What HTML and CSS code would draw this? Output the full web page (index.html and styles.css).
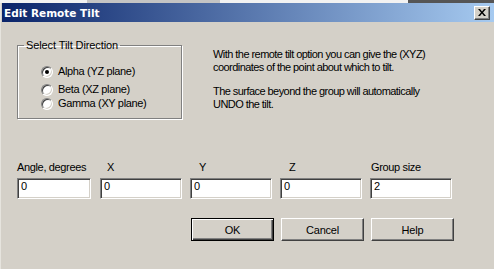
FILE: index.html
```html
<!DOCTYPE html>
<html lang="en">
<head>
    <meta charset="UTF-8">
    <title>Edit Remote Tilt</title>
    <link rel="stylesheet" href="styles.css">
</head>
<body>
    <div class="backdrop">
        <span class="back-grey"></span>
        <span class="back-dark"></span>
    </div>
    <div class="window">
        <header class="titlebar">
            <span class="title">Edit Remote Tilt</span>
            <button class="close-btn" title="Close">
                <svg width="8" height="7" viewBox="0 0 8 7">
                    <path d="M0 0h2l2 2.5L6 0h2L5 3.5 8 7H6L4 4.5 2 7H0l3-3.5z" fill="#000"/>
                </svg>
            </button>
        </header>

        <main class="content">
            <section class="top-row">
                <fieldset class="group">
                    <legend>Select Tilt Direction</legend>
                    <div class="radios">
                        <label class="radio-row alpha">
                            <span class="radio checked"></span>
                            Alpha (YZ plane)
                        </label>
                        <label class="radio-row beta">
                            <span class="radio"></span>
                            Beta (XZ plane)
                        </label>
                        <label class="radio-row gamma">
                            <span class="radio"></span>
                            Gamma (XY plane)
                        </label>
                    </div>
                </fieldset>

                <div class="info">
                    <p>With the remote tilt option you can give the (XYZ)<br>coordinates of the point about which to tilt.</p>
                    <p class="second">The surface beyond the group will automatically<br>UNDO the tilt.</p>
                </div>
            </section>

            <!-- angle, coordinates and group size -->
            <section class="fields">
                <div class="field first">
                    <span class="field-label">Angle, degrees</span>
                    <input type="text" value="0">
                </div>
                <div class="field">
                    <span class="field-label lbl-x">X</span>
                    <input type="text" value="0">
                </div>
                <div class="field">
                    <span class="field-label lbl-y">Y</span>
                    <input type="text" value="0">
                </div>
                <div class="field">
                    <span class="field-label lbl-z">Z</span>
                    <input type="text" value="0">
                </div>
                <div class="field">
                    <span class="field-label lbl-group">Group size</span>
                    <input type="text" value="2">
                </div>
            </section>

            <section class="buttons">
                <button class="btn default">OK</button>
                <button class="btn">Cancel</button>
                <button class="btn">Help</button>
            </section>
        </main>
    </div>
</body>
</html>
```

FILE: styles.css
```css
body {
    margin: 0;
    width: 494px;
    height: 269px;
    overflow: hidden;
    background-color: #d4d0c8;
    font-family: "Liberation Sans", Arial, sans-serif;
    font-size: 11px;
    letter-spacing: -0.35px;
    color: #000;
}

/* strip of whatever is behind the dialog */
.backdrop {
    display: flex;
    height: 3px;
    background-color: #f2f2f2;
}

.back-grey {
    width: 133px;
    margin-left: 87px;
    background-color: #c4c4c4;
}

.back-dark {
    width: 86px;
    margin-left: auto;
    background-color: #555;
}

.window {
    height: 266px;
    border-left: 1px solid #e6e4de;
}

.titlebar {
    display: flex;
    align-items: center;
    justify-content: space-between;
    height: 19px;
    margin-left: 1px;
    padding: 0 4px 0 2px;
    background: linear-gradient(to right, #0a246a, #a6caf0);
}

.title {
    color: #fff;
    font-family: "DejaVu Sans", Tahoma, sans-serif;
    font-weight: bold;
    font-size: 10.5px;
    letter-spacing: 0;
}

.close-btn {
    display: flex;
    align-items: center;
    justify-content: center;
    width: 16px;
    height: 14px;
    padding: 0;
    background-color: #d4d0c8;
    border: 1px solid;
    border-color: #fff #404040 #404040 #fff;
    box-shadow: inset -1px -1px 0 #808080;
}

.content {
    padding-left: 16px;
}

.top-row {
    display: flex;
    align-items: flex-start;
    height: 97px;
}

.group {
    box-sizing: border-box;
    width: 165px;
    height: 80px;
    margin: 17px 0 0 0;
    padding: 0;
    border: 1px solid #808080;
    box-shadow: 1px 1px 0 #fff, inset 1px 1px 0 #fff;
}

.group legend {
    margin-left: 6px;
    padding: 0 2px;
    line-height: 13px;
    letter-spacing: -0.1px;
}

.radios {
    padding-left: 23px;
}

.radio-row {
    display: flex;
    align-items: center;
    gap: 5px;
    height: 13px;
    line-height: 13px;
}

.alpha {
    margin-top: 13px;
}

.beta {
    margin-top: 5px;
}

.gamma {
    margin-top: 1px;
}

.radio {
    box-sizing: border-box;
    position: relative;
    width: 12px;
    height: 12px;
    border-radius: 50%;
    border: 1px solid;
    border-color: #808080 #fff #fff #808080;
    background-color: #fff;
    box-shadow: inset 1px 1px 0 #404040, inset -1px -1px 0 #d4d0c8;
}

.radio.checked::after {
    content: "";
    position: absolute;
    left: 3px;
    top: 3px;
    width: 4px;
    height: 4px;
    border-radius: 50%;
    background-color: #000;
}

.info {
    margin: 26px 0 0 31px;
    line-height: 13px;
    letter-spacing: -0.55px;
}

.info p {
    margin: 0;
}

.info .second {
    margin-top: 11px;
}

.fields {
    display: flex;
    margin-top: 42px;
}

.field {
    display: flex;
    flex-direction: column;
    width: 82px;
    margin-right: 8px;
}

.field.first {
    width: 74px;
    margin-right: 9px;
}

.field-label {
    line-height: 13px;
    margin-bottom: 4px;
}

.lbl-x {
    padding-left: 7px;
}

.lbl-y,
.lbl-z {
    padding-left: 9px;
}

.lbl-group {
    padding-left: 1px;
}

.field input {
    box-sizing: border-box;
    width: 100%;
    height: 21px;
    margin: 0;
    padding: 0 3px 6px 3px;
    border: 1px solid;
    border-color: #808080 #fff #fff #808080;
    box-shadow: inset 1px 1px 0 #404040, inset -1px -1px 0 #d4d0c8;
    background-color: #fff;
    font-family: "Liberation Sans", Arial, sans-serif;
    font-size: 11px;
    color: #000;
    outline: none;
}

.buttons {
    display: flex;
    gap: 7px;
    margin: 19px 0 0 174px;
}

.btn {
    box-sizing: border-box;
    width: 83px;
    height: 23px;
    padding: 0;
    background-color: #d4d0c8;
    border: 1px solid;
    border-color: #fff #404040 #404040 #fff;
    box-shadow: inset -1px -1px 0 #808080;
    font-family: "Liberation Sans", Arial, sans-serif;
    font-size: 11px;
    letter-spacing: -0.2px;
    color: #000;
}

.btn.default {
    border: 1px solid #000;
    box-shadow: inset 1px 1px 0 #fff, inset -1px -1px 0 #404040, inset -2px -2px 0 #808080;
}
```
